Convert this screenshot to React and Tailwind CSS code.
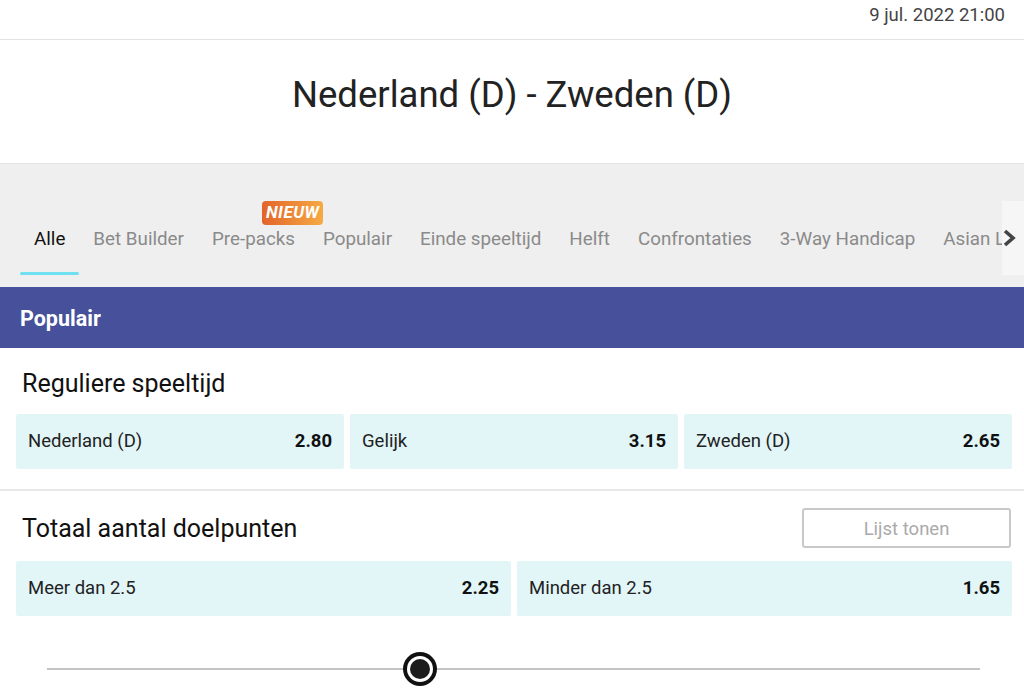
import { useState } from 'react'

const tabs = ['Alle', 'Bet Builder', 'Pre-packs', 'Populair', 'Einde speeltijd', 'Helft', 'Confrontaties', '3-Way Handicap', 'Asian Lines']

function Odd({ label, value }) {
  return (
    <div className="flex-1 flex items-center justify-between h-[55px] px-3 bg-[#e2f6f8] rounded-[2px]">
      <span className="text-[18.5px] text-[#222]">{label}</span>
      <span className="text-[18.5px] font-bold text-[#111]">{value}</span>
    </div>
  )
}

export default function App() {
  const [active, setActive] = useState(0)

  return (
    <div className="w-[1024px] h-[693px] overflow-hidden bg-white font-['Roboto',sans-serif]">
      {/* datum */}
      <div className="h-[40px] border-b border-[#e3e3e3] flex items-start justify-end pr-[19px] pt-[2px]">
        <span className="text-[18.5px] text-[#444]">9 jul. 2022 21:00</span>
      </div>

      {/* wedstrijd */}
      <div className="h-[123px] flex items-center justify-center pb-[12px]">
        <h1 className="text-[36.5px] text-[#222]">Nederland (D) - Zweden (D)</h1>
      </div>

      {/* tabs */}
      <div className="h-[124px] bg-[#efefef] border-t border-[#e6e6e6] relative overflow-hidden">
        <div className="flex items-end h-full pl-[20px] pb-[12px] whitespace-nowrap">
          {tabs.map((t, i) => (
            <button
              key={t}
              onClick={() => setActive(i)}
              className={`relative h-[75px] px-[14px] pt-[4px] flex items-center text-[18.8px] ${active === i ? 'text-[#111]' : 'text-[#8a8a8a]'}`}
            >
              {t}
              {t === 'Pre-packs' && (
                <span className="absolute left-[64px] top-[1px] px-[4px] h-[24px] flex items-center rounded-[4px] bg-gradient-to-r from-[#e2632a] to-[#f5aa44] text-white text-[17px] font-bold italic tracking-[0.5px]">
                  NIEUW
                </span>
              )}
              {active === i && (
                <span className="absolute left-0 right-0 bottom-0 h-[3px] bg-[#6fe0ef] rounded-full" />
              )}
            </button>
          ))}
        </div>
        <div className="absolute right-0 top-[37px] w-[22px] h-[74px] bg-[#f6f6f6] flex items-center justify-start">
          <svg width="16" height="18" viewBox="0 0 16 18" className="-ml-[1px]">
            <path d="M4 2 L12 9 L4 16" fill="none" stroke="#444" strokeWidth="3.6" />
          </svg>
        </div>
      </div>

      {/* populair balk */}
      <div className="h-[61px] bg-[#46509b] flex items-center px-[20px] pt-[3px]">
        <span className="text-[21.5px] font-bold text-white">Populair</span>
      </div>

      {/* reguliere speeltijd */}
      <div className="pl-[16px] pr-[12px] pt-[20px] pb-[20px] border-b-2 border-[#e8e8e8]">
        <h2 className="text-[25px] text-[#111] pl-[6px] mb-[14px] leading-[32px]">Reguliere speeltijd</h2>
        <div className="flex gap-[6px]">
          <Odd label="Nederland (D)" value="2.80" />
          <Odd label="Gelijk" value="3.15" />
          <Odd label="Zweden (D)" value="2.65" />
        </div>
      </div>

      {/* totaal aantal doelpunten */}
      <div className="pl-[16px] pr-[12px] pt-[16px]">
        <div className="flex items-center justify-between pl-[6px] mb-[14px]">
          <h2 className="text-[25px] text-[#111] leading-[32px] pt-[4px]">Totaal aantal doelpunten</h2>
          <button className="relative top-[1px] w-[209px] h-[40px] mr-[1px] pt-[3px] border-2 border-[#c8c8c8] rounded-[3px] text-[18.5px] text-[#aaa]">
            Lijst tonen
          </button>
        </div>
        <div className="flex gap-[6px]">
          <Odd label="Meer dan 2.5" value="2.25" />
          <Odd label="Minder dan 2.5" value="1.65" />
        </div>
      </div>

      {/* slider */}
      <div className="relative h-[78px] mx-[47px] w-[933px]">
        <div className="absolute left-0 right-0 top-[52px] h-[2px] bg-[#c4c4c4]" />
        <div className="absolute left-[356px] top-[36px] w-[34px] h-[34px] rounded-full bg-[#111] flex items-center justify-center">
          <div className="w-[26px] h-[26px] rounded-full bg-white flex items-center justify-center">
            <div className="w-[20px] h-[20px] rounded-full bg-[#1c1c1c]" />
          </div>
        </div>
      </div>
    </div>
  )
}
